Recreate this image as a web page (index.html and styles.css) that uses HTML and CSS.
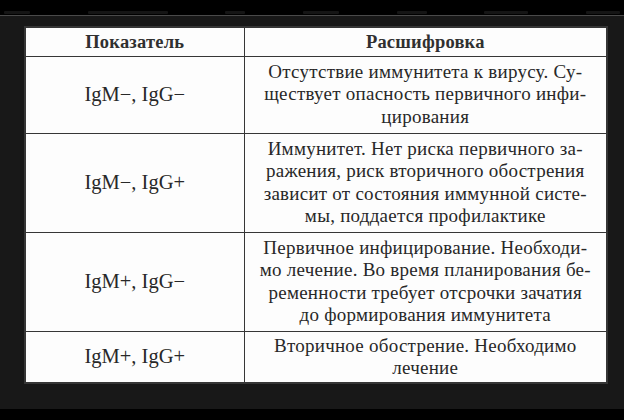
FILE: index.html
```html
<!DOCTYPE html>
<html lang="ru">
<head>
<meta charset="utf-8">
<link rel="stylesheet" href="styles.css">
</head>
<body>
<div class="screen">
  <div class="top-band">
    <div class="ghost">
      <i class="g g1"></i><i class="g g2"></i><i class="g g3"></i><i class="g g4"></i><i class="g g5"></i><i class="g g6"></i><i class="g g7"></i>
    </div>
  </div>
  <div class="stage">
    <table class="tbl">
      <colgroup><col class="c1"><col class="c2"></colgroup>
      <thead>
        <tr class="r-head"><th>Показатель</th><th>Расшифровка</th></tr>
      </thead>
      <tbody>
        <tr class="r1">
          <td class="ind">IgM−, IgG−</td>
          <td class="desc">Отсутствие иммунитета к вирусу. Су-<br>ществует опасность первичного инфи-<br>цирования</td>
        </tr>
        <tr class="r2">
          <td class="ind">IgM−, IgG+</td>
          <td class="desc">Иммунитет. Нет риска первичного за-<br>ражения, риск вторичного обострения<br>зависит от состояния иммунной систе-<br>мы, поддается профилактике</td>
        </tr>
        <tr class="r3">
          <td class="ind">IgM+, IgG−</td>
          <td class="desc">Первичное инфицирование. Необходи-<br>мо лечение. Во время планирования бе-<br>ременности требует отсрочки зачатия<br>до формирования иммунитета</td>
        </tr>
        <tr class="r4">
          <td class="ind">IgM+, IgG+</td>
          <td class="desc">Вторичное обострение. Необходимо<br>лечение</td>
        </tr>
      </tbody>
    </table>
  </div>
  <div class="bottom-band"></div>
</div>
</body>
</html>
```
FILE: styles.css
```css
* { box-sizing: border-box; }
html, body { margin: 0; padding: 0; background: #000; }
.screen {
  width: 624px;
  height: 420px;
  display: flex;
  flex-direction: column;
  background: #000;
  overflow: hidden;
}
.top-band {
  height: 16px;
  flex: none;
  background: #000;
  border-bottom: 1px solid #4a4a4a;
}
.ghost {
  display: flex;
  justify-content: space-between;
  align-items: flex-end;
  height: 15px;
  padding: 0 4px 1px;
}
.g { display: block; height: 3px; background: #151515; border-radius: 1px; }
.g1 { width: 26px; }
.g2 { width: 80px; }
.g3 { width: 20px; }
.g4 { width: 36px; }
.g5 { width: 30px; }
.g6 { width: 44px; }
.g7 { width: 34px; }
.stage {
  flex: none;
  height: 393px;
  background: #181818;
  padding: 10px 16px 0 24px;
}
.bottom-band { flex: 1; background: #000; }
.tbl {
  width: 584px;
  border-collapse: collapse;
  table-layout: fixed;
  background: #fdfdfd;
  color: #282828;
  font-family: "Liberation Serif", serif;
  border: 2px solid #363636;
}
.c1 { width: 219px; }
.tbl th, .tbl td {
  border: 1.5px solid #363636;
  text-align: center;
  vertical-align: middle;
  padding: 0 4px;
}
.tbl th {
  font-size: 18.5px;
  font-weight: 700;
  letter-spacing: 0.2px;
  color: #303030;
  height: 29px;
  padding-top: 1px;
}
.r1 td { height: 77px; }
.r2 td { height: 99px; }
.r3 td { height: 99px; }
.r4 td { height: 52px; vertical-align: top; }
.ind {
  font-size: 20.5px;
}
.desc {
  font-size: 19px;
  line-height: 22.5px;
  letter-spacing: 0.25px;
}
.r4 .desc { padding-top: 3px; }
.r4 .ind { vertical-align: middle; }
```
